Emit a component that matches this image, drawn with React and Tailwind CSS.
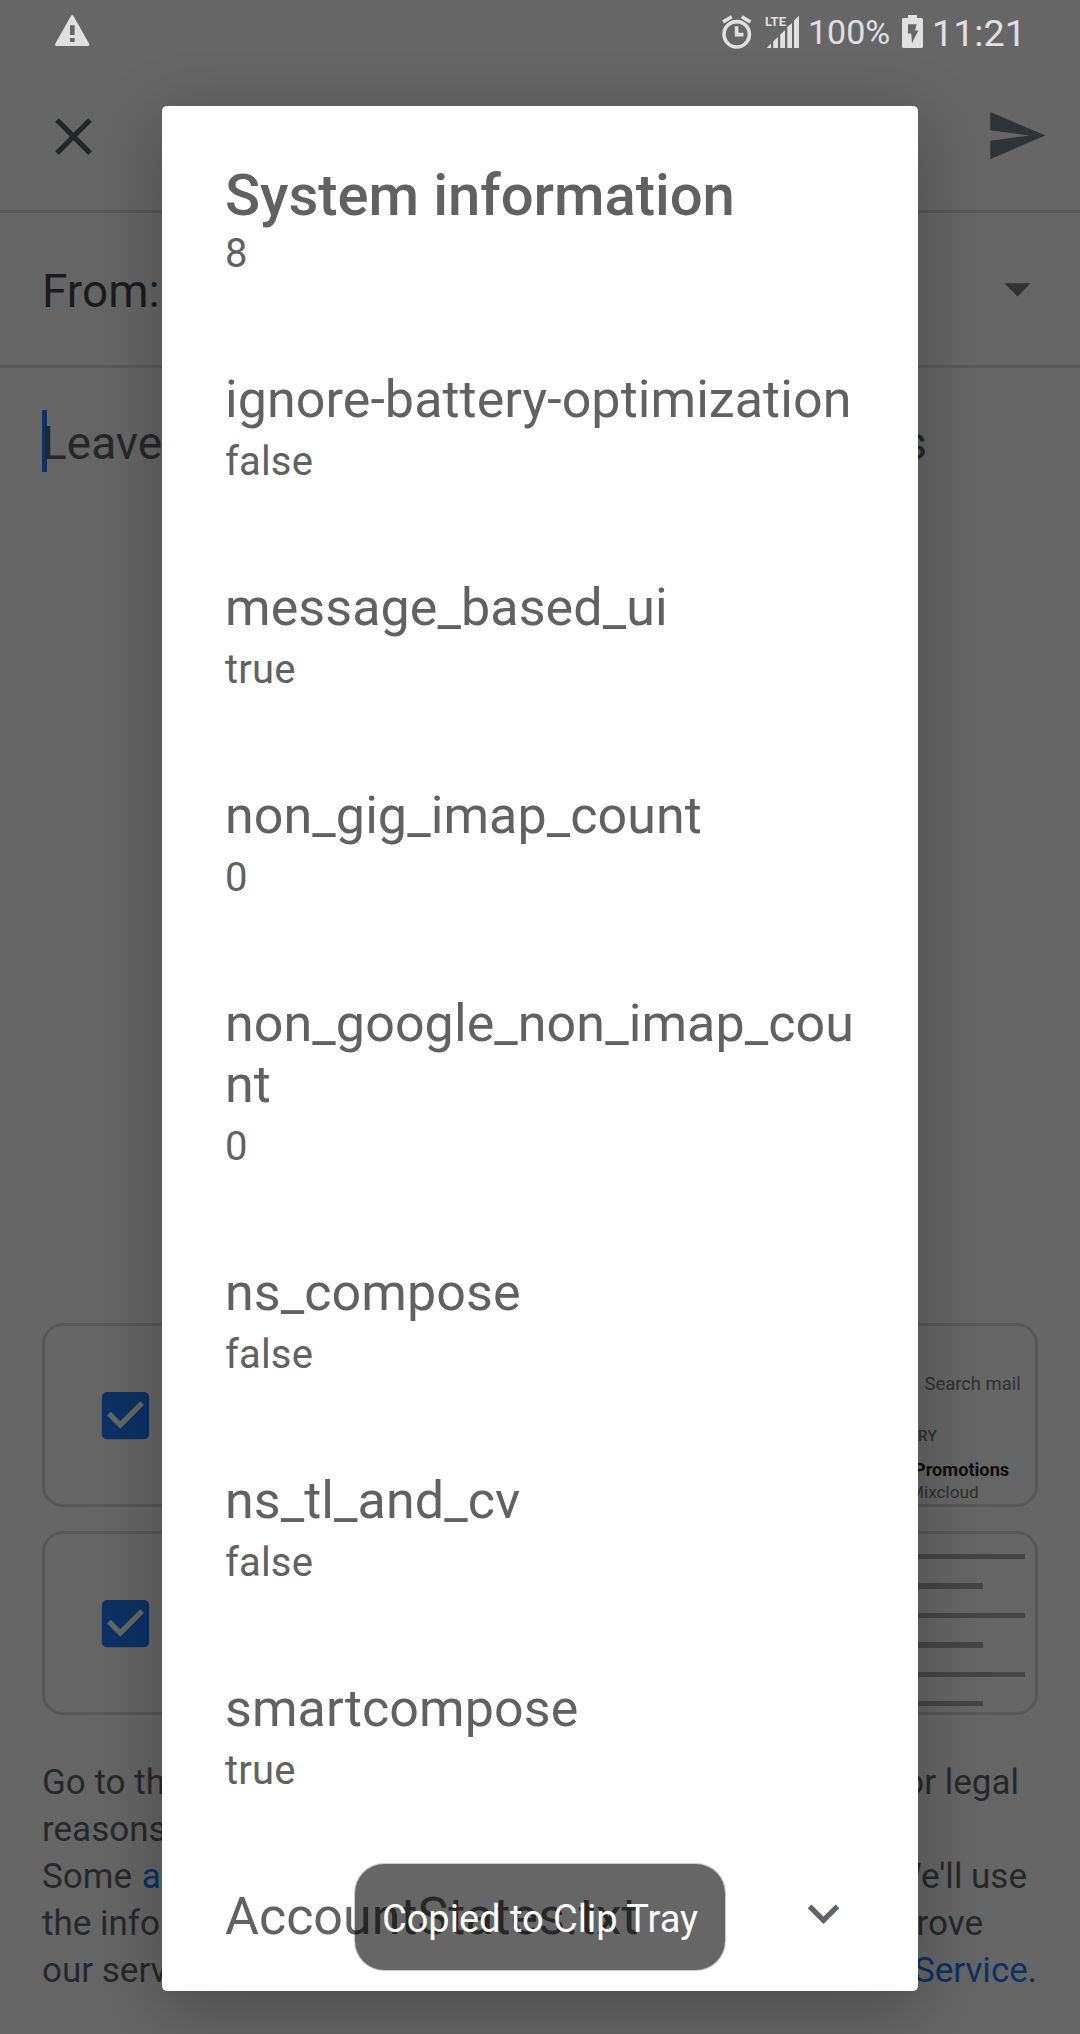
import React from "react";

const entries = [
  { name: "ignore-battery-optimization", value: "false" },
  { name: "message_based_ui", value: "true" },
  { name: "non_gig_imap_count", value: "0" },
  { name: "non_google_non_imap_count", value: "0" },
  { name: "ns_compose", value: "false" },
  { name: "ns_tl_and_cv", value: "false" },
  { name: "smartcompose", value: "true" },
];

function MaterialIcon({ path, className }) {
  return (
    <svg viewBox="0 0 24 24" fill="currentColor" className={`size-[63px] shrink-0 ${className}`}>
      <path d={path} />
    </svg>
  );
}

function StatusBar() {
  return (
    <div className="flex h-16 items-start text-[#e0e0e0]">
      <svg viewBox="0 0 35 31" className="mt-[15px] ml-[55px] h-[31px] w-[35px]" fill="currentColor">
        <path
          fillRule="evenodd"
          d="M15.9 1 Q17.2 -.8 18.5 1 L34 28.6 Q35 31 32.8 31 H1.5 Q-.6 31 .4 28.6Z M15 10.3V20h4.7V10.3Z M15 23v4h4.7v-4Z"
        />
      </svg>
      <svg viewBox="0 0 30 35" className="mt-[15px] ml-[632px] h-[35px] w-[30px]" fill="none" stroke="currentColor">
        <circle cx="14.7" cy="19.3" r="12.7" strokeWidth="3.6" />
        <path d="M14.6 11.2V19.6H21.5" strokeWidth="3.6" />
        <path d="M1 7 L9.7 1.8 M19.7 1.8 L28.4 7" strokeWidth="3.6" />
      </svg>
      <div className="relative mt-[15px] ml-[14px] h-[34px] w-[34px]">
        <span className="absolute top-0 -left-px text-[13px] leading-[13px] font-bold">LTE</span>
        <svg viewBox="0 0 34 34" className="h-[34px] w-[34px]" fill="currentColor">
          <path d="M.7 33 L5 28.6V33Z M7.2 33V26.5L12 22V33Z M14.2 33V19.7L19 15V33Z M21.3 33V12L26 8V33Z M28 33V5.5L33 .8V33Z" />
        </svg>
      </div>
      <span className="mt-[15px] ml-2 w-[84px] text-[34px] leading-[34px]">100%</span>
      <svg viewBox="0 0 21 33" className="mt-[15px] ml-[10px] h-[33px] w-[21px]" fill="currentColor">
        <path
          fillRule="evenodd"
          d="M6 0H15V3H19.5Q21 3 21 4.5V31.5Q21 33 19.5 33H1.5Q0 33 0 31.5V4.5Q0 3 1.5 3H6Z M6 9.3V18.6H9.3L10 28.3L16.3 15.6H13L14.6 9.3Z"
        />
      </svg>
      <span className="mt-[14px] ml-[9px] text-[37.7px] leading-[38px]">11:21</span>
    </div>
  );
}

function CheckCard({ children }) {
  return (
    <div className="flex h-[184px] justify-between overflow-hidden rounded-[21px] border-[3px] border-[#575859]">
      <MaterialIcon
        className="mt-[57.5px] ml-[49px] text-[#0c3163]"
        path="M19 3H5c-1.11 0-2 .9-2 2v14c0 1.1.89 2 2 2h14c1.11 0 2-.9 2-2V5c0-1.1-.89-2-2-2zm-9 14l-5-5 1.41-1.41L10 14.17l7.59-7.59L19 8l-9 9z"
      />
      {children}
    </div>
  );
}

function Link({ children }) {
  return <span className="text-[#0c3163]">{children}</span>;
}

function LegalText() {
  return (
    <div className="mt-11 ml-[42px] text-[35px] leading-[47px] whitespace-nowrap text-[#272829] *:flex *:justify-between">
      <div className="w-[977px]">
        <span>Go to the Legal Help page</span>
        <span>to request changes for legal</span>
      </div>
      <div>reasons.</div>
      <div className="w-[985px]">
        <span className="[word-spacing:1px]">
          Some <Link>account information</Link>
        </span>
        <span>may be sent to Google. We'll use</span>
      </div>
      <div className="w-[941px]">
        <span>the information you give us</span>
        <span>to help us improve</span>
      </div>
      <div className="w-[995px]">
        <span>
          our services, subject to our <Link>Privacy Policy</Link>
        </span>
        <span>
          and <Link>Terms of Service</Link>.
        </span>
      </div>
    </div>
  );
}

function FeedbackScreen() {
  return (
    <div className="flex h-full flex-col">
      <StatusBar />
      <div className="flex h-[149px] justify-between border-b-[3px] border-[#56585a] pr-8 pl-[42px]">
        <MaterialIcon
          className="mt-[41px] text-[#232627]"
          path="M19 6.41L17.59 5 12 10.59 6.41 5 5 6.41 10.59 12 5 17.59 6.41 19 12 13.41 17.59 19 19 17.59 13.41 12z"
        />
        <MaterialIcon className="mt-10 text-[#303437]" path="M2.01 21L23 12 2.01 3 2 10l15 2-15 2z" />
      </div>
      <div className="flex h-[155px] justify-between border-b-[3px] border-[#5a5a5a] pr-[31px] pl-[42px]">
        <span className="mt-12 text-[46px] leading-[60px] text-[#1b1c1d]">From:</span>
        <MaterialIcon className="mt-11 text-[#323232]" path="M7 10l5 5 5-5z" />
      </div>
      <div className="mt-[42px] ml-[42px] flex h-[62px] w-[885px] justify-between border-l-[5px] border-[#0d3263] text-[46px] text-[#262728]">
        <span className="-ml-[5px] leading-[66px]">Leave</span>
        <span className="leading-[66px]">s</span>
      </div>
      <div className="mx-[42px] mt-[851px] flex flex-col gap-6">
        <CheckCard>
          <div className="flex w-[150px] flex-col text-[#2e3032]">
            <span className="mt-[46px] ml-[39.5px] text-[18.4px] leading-[24px]">Search mail</span>
            <span className="mt-[30px] mr-[98px] self-end text-[15px] leading-[20px] font-medium tracking-[0.4px]">PRIMARY</span>
            <span className="mt-[12px] ml-[29px] text-[18.2px] leading-6 font-bold text-[#0e0e0e]">Promotions</span>
            <span className="ml-[24px] text-[17.2px] leading-5">Mixcloud</span>
          </div>
        </CheckCard>
        <CheckCard>
          <div className="mt-5 mr-[10px] flex w-40 flex-col gap-6 *:h-[5.4px] *:shrink-0 *:bg-[#454545]">
            <div className="w-40" />
            <div className="w-[118px]" />
            <div className="w-40" />
            <div className="w-[118px]" />
            <div className="w-40" />
            <div className="w-[118px]" />
          </div>
        </CheckCard>
      </div>
      <LegalText />
    </div>
  );
}

function SystemInfoDialog() {
  return (
    <div className="absolute top-[106px] left-[162px] flex h-[1885px] w-[756px] flex-col rounded-[5px] bg-white pt-[55px] pr-11 pl-[63px] text-[#616161] shadow-[0_18px_70px_rgba(0,0,0,0.28)]">
      <h1 className="text-[58px] leading-[68px] font-medium tracking-[-0.05px]">System information</h1>
      <div className="mt-px text-[40px] leading-[47px]">8</div>
      {entries.map((entry) => (
        <div key={entry.name} className="mt-[92px]">
          <div className="text-[52px] leading-[61px] tracking-[0.08px] break-all">{entry.name}</div>
          <div className="mt-2 text-[40px] leading-[47px] tracking-[0.15px]">{entry.value}</div>
        </div>
      ))}
      <div className="mt-[92px] flex justify-between pr-[19px]">
        <span className="text-[52px] leading-[61px]">AccountStates.txt</span>
        <MaterialIcon className="-mt-1 text-[#5f6368]" path="M16.59 8.59L12 13.17 7.41 8.59 6 10l6 6 6-6z" />
      </div>
    </div>
  );
}

export default function App() {
  return (
    <div className="relative h-[2034px] w-[1080px] overflow-hidden bg-[#666666] font-[Roboto,sans-serif]">
      <FeedbackScreen />
      <SystemInfoDialog />
      <div className="absolute top-[1863px] left-[354px] flex h-[108px] w-[372px] justify-center rounded-[30px] border border-black/20 bg-black/60 bg-clip-padding pt-8 text-[38px] leading-[46px] whitespace-nowrap text-white">
        Copied to Clip Tray
      </div>
    </div>
  );
}
